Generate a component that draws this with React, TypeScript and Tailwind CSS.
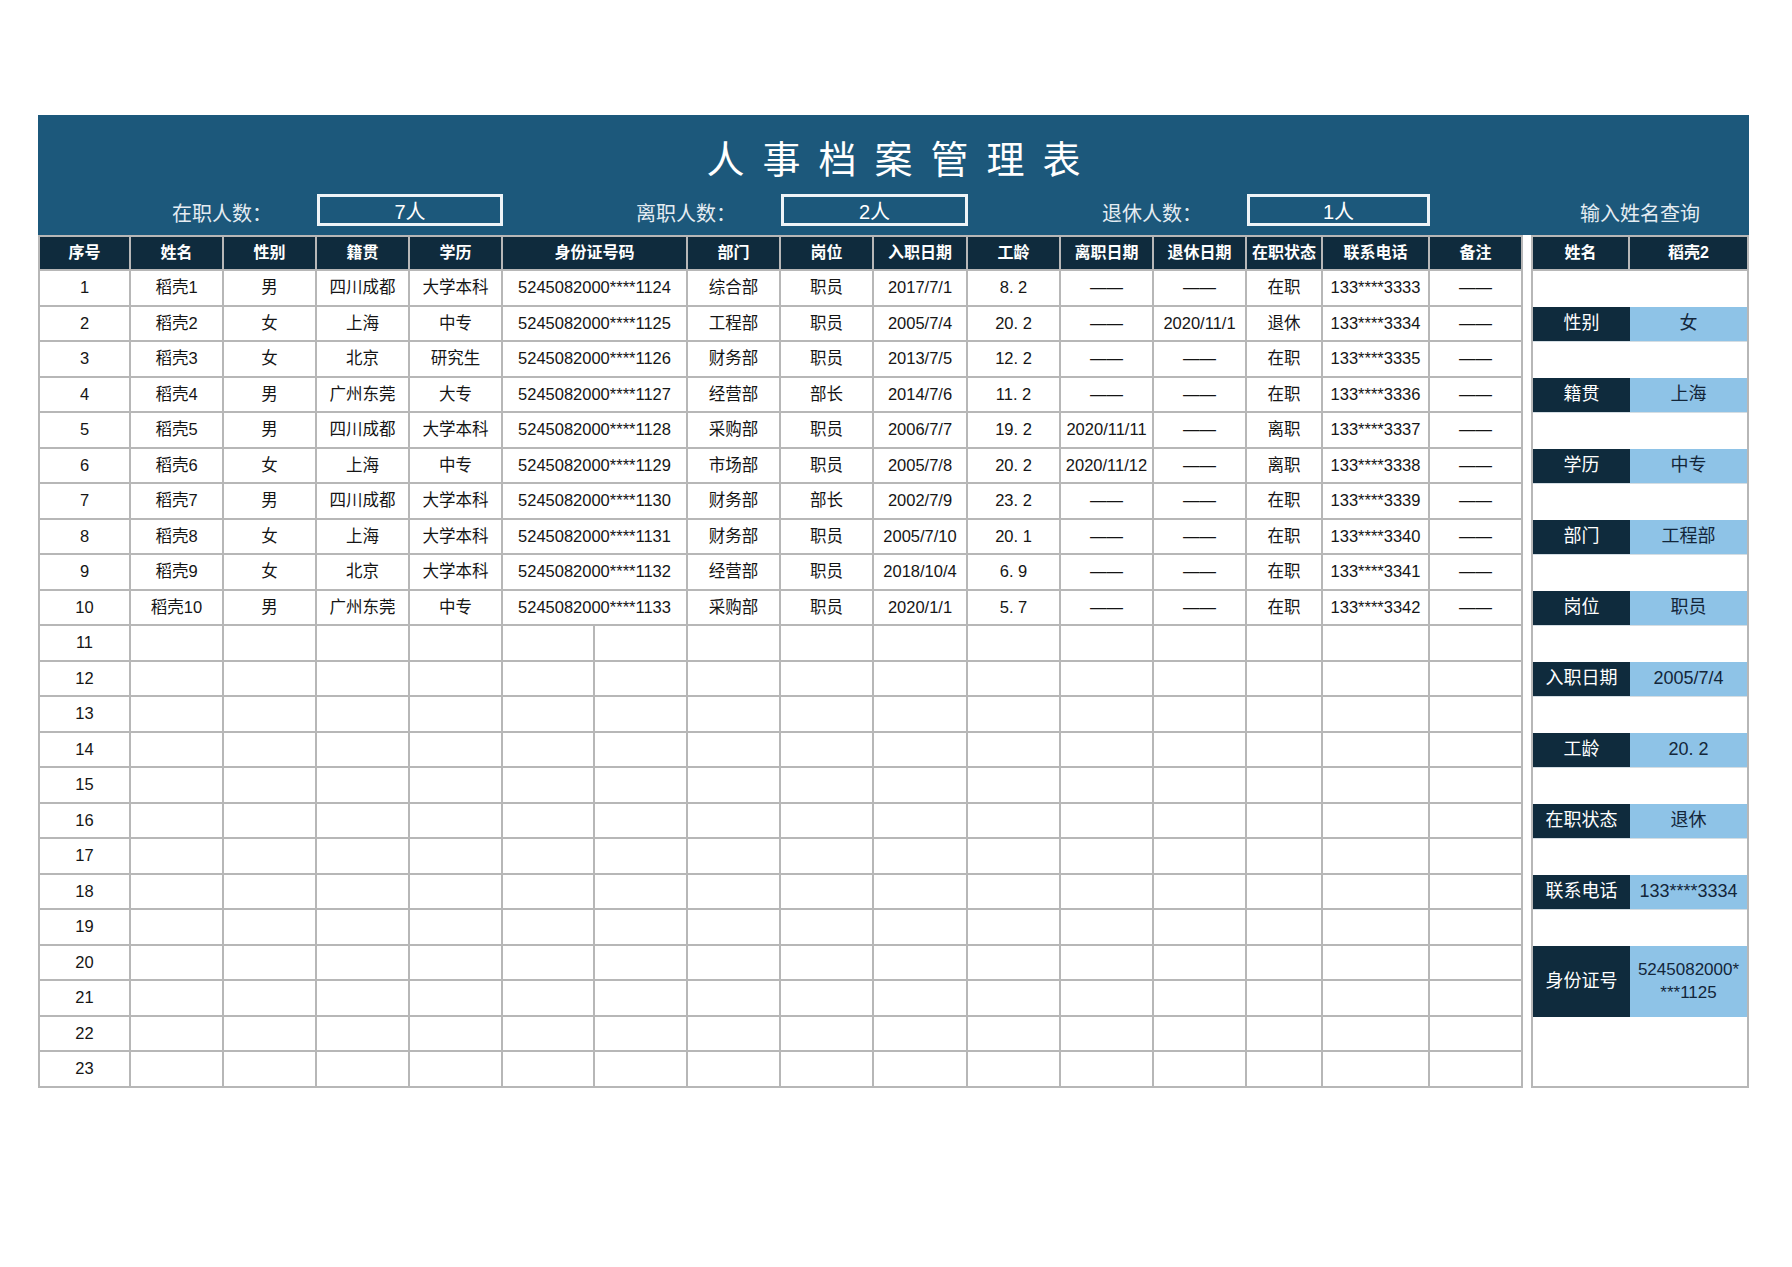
import React from 'react'

const cols =
  'grid grid-cols-[93px_93px_93px_93px_93px_185px_93px_93px_94px_93px_93px_93px_76px_107px_93px]'

const headers = [
  '序号', '姓名', '性别', '籍贯', '学历', '身份证号码', '部门', '岗位',
  '入职日期', '工龄', '离职日期', '退休日期', '在职状态', '联系电话', '备注',
]

const D = '——'

const rows: string[][] = [
  ['1', '稻壳1', '男', '四川成都', '大学本科', '5245082000****1124', '综合部', '职员', '2017/7/1', '8. 2', D, D, '在职', '133****3333', D],
  ['2', '稻壳2', '女', '上海', '中专', '5245082000****1125', '工程部', '职员', '2005/7/4', '20. 2', D, '2020/11/1', '退休', '133****3334', D],
  ['3', '稻壳3', '女', '北京', '研究生', '5245082000****1126', '财务部', '职员', '2013/7/5', '12. 2', D, D, '在职', '133****3335', D],
  ['4', '稻壳4', '男', '广州东莞', '大专', '5245082000****1127', '经营部', '部长', '2014/7/6', '11. 2', D, D, '在职', '133****3336', D],
  ['5', '稻壳5', '男', '四川成都', '大学本科', '5245082000****1128', '采购部', '职员', '2006/7/7', '19. 2', '2020/11/11', D, '离职', '133****3337', D],
  ['6', '稻壳6', '女', '上海', '中专', '5245082000****1129', '市场部', '职员', '2005/7/8', '20. 2', '2020/11/12', D, '离职', '133****3338', D],
  ['7', '稻壳7', '男', '四川成都', '大学本科', '5245082000****1130', '财务部', '部长', '2002/7/9', '23. 2', D, D, '在职', '133****3339', D],
  ['8', '稻壳8', '女', '上海', '大学本科', '5245082000****1131', '财务部', '职员', '2005/7/10', '20. 1', D, D, '在职', '133****3340', D],
  ['9', '稻壳9', '女', '北京', '大学本科', '5245082000****1132', '经营部', '职员', '2018/10/4', '6. 9', D, D, '在职', '133****3341', D],
  ['10', '稻壳10', '男', '广州东莞', '中专', '5245082000****1133', '采购部', '职员', '2020/1/1', '5. 7', D, D, '在职', '133****3342', D],
]

const emptyRows = Array.from({ length: 13 }, (_, i) => String(i + 11))

// query panel, one entry per table row (null = blank row)
const panel: ([string, string] | null)[] = [
  null, ['性别', '女'], null, ['籍贯', '上海'], null, ['学历', '中专'], null,
  ['部门', '工程部'], null, ['岗位', '职员'], null, ['入职日期', '2005/7/4'], null,
  ['工龄', '20. 2'], null, ['在职状态', '退休'], null, ['联系电话', '133****3334'], null,
]

function Cell({ children, first }: { children?: React.ReactNode; first?: boolean }) {
  return (
    <div
      className={
        'h-[35.5px] flex items-center justify-center border-r-2 border-b-2 border-[#b7b7b7] text-[16.5px] text-[#151515] whitespace-nowrap' +
        (first ? ' border-l-2' : '')
      }
    >
      {children}
    </div>
  )
}

function StatBox({ value }: { value: string }) {
  return (
    <div className="col-span-2 h-[32px] pt-[3px] border-[3px] border-[#eef4f8] flex items-center justify-center text-[20px] text-white">
      {value}
    </div>
  )
}

function StatLabel({ text, span }: { text: string; span: string }) {
  return (
    <div className={span + ' pt-[5px] flex items-center justify-end pr-[45px] text-[20px] text-[#e4ecf2]'}>
      {text}
    </div>
  )
}

export default function App() {
  return (
    <div
      className="w-[1792px] h-[1267px] bg-white pt-[115px] pl-[38px]"
      style={{ fontFamily: '"Liberation Sans", "Noto Sans CJK SC", sans-serif' }}
    >
      <div className="w-[1711px]">
        <div className="h-[120px] bg-[#1c587b] flex flex-col">
          <div
            className="h-[79px] pt-[4px] flex items-center justify-center text-[38px] text-white tracking-[18px] pl-[18px]"
            style={{ fontFamily: '"Noto Sans CJK SC", sans-serif' }}
          >
            人事档案管理表
          </div>
          <div className="flex gap-[8px]">
            <div className={cols + ' w-[1485px]'}>
              <StatLabel text="在职人数：" span="col-span-3" />
              <StatBox value="7人" />
              <StatLabel text="离职人数：" span="col-span-2" />
              <StatBox value="2人" />
              <StatLabel text="退休人数：" span="col-span-3" />
              <StatBox value="1人" />
            </div>
            <div className="w-[218px] pt-[5px] flex items-center justify-center text-[20px] text-[#e4ecf2]">
              输入姓名查询
            </div>
          </div>
        </div>

        <div className="flex gap-[8px]">
          <div className="w-[1485px]">
            <div className={cols}>
              {headers.map((h, i) => (
                <div
                  key={h}
                  className={
                    'h-[36px] flex items-center justify-center bg-[#0f2b3d] border-t-2 border-r-2 border-b-2 border-[#b7b7b7] text-[16px] font-bold text-white' +
                    (i === 0 ? ' border-l-2' : '')
                  }
                >
                  {h}
                </div>
              ))}
            </div>
            {rows.map((r) => (
              <div key={r[0]} className={cols}>
                {r.map((v, i) => (
                  <Cell key={i} first={i === 0}>
                    {v}
                  </Cell>
                ))}
              </div>
            ))}
            {emptyRows.map((n) => (
              <div key={n} className={cols}>
                {headers.map((_, i) =>
                  i === 5 ? (
                    <div key={i} className="h-[35.5px] flex border-r-2 border-b-2 border-[#b7b7b7]">
                      <div className="w-[92px] border-r-2 border-[#b7b7b7]" />
                    </div>
                  ) : (
                    <Cell key={i} first={i === 0}>
                      {i === 0 ? n : null}
                    </Cell>
                  ),
                )}
              </div>
            ))}
          </div>

          <div className="w-[218px] border-x-2 border-b-2 border-[#b7b7b7] flex flex-col">
            <div className="h-[36px] flex border-t-2 border-b-2 border-[#b7b7b7] bg-[#0f2b3d] text-[16px] font-bold text-white">
              <div className="w-[97px] flex items-center justify-center border-r-2 border-[#b7b7b7]">姓名</div>
              <div className="flex-1 flex items-center justify-center">稻壳2</div>
            </div>
            {panel.map((p, i) =>
              p ? (
                <div key={i} className="h-[35.5px] flex text-[18px] border-b border-[#d4dde3]">
                  <div className="w-[97px] bg-[#0f2b3d] text-white flex items-center justify-center">{p[0]}</div>
                  <div className="flex-1 bg-[#8ec3e7] text-[#13263a] flex items-center justify-center whitespace-nowrap">
                    {p[1]}
                  </div>
                </div>
              ) : (
                <div key={i} className="h-[35.5px]" />
              ),
            )}
            <div className="h-[71px] flex text-[18px]">
              <div className="w-[97px] bg-[#0f2b3d] text-white flex items-center justify-center">身份证号</div>
              <div className="flex-1 bg-[#8ec3e7] text-[#13263a] flex flex-col items-center justify-center leading-[23px] text-[17px]">
                <span>5245082000*</span>
                <span>***1125</span>
              </div>
            </div>
            <div className="flex-1" />
          </div>
        </div>
      </div>
    </div>
  )
}
